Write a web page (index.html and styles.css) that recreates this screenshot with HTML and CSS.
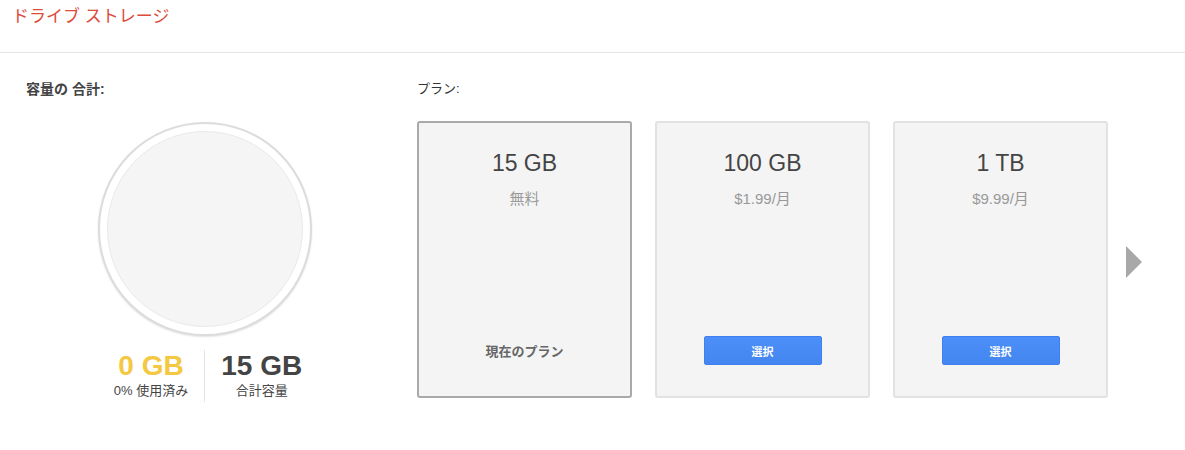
FILE: index.html
```html
<!DOCTYPE html>
<html lang="ja">
<head>
<meta charset="utf-8">
<title>ドライブ ストレージ</title>
<link rel="stylesheet" href="styles.css">
</head>
<body>
<header class="header">
  <h1 class="title">ドライブ ストレージ</h1>
</header>
<main class="main">
  <section class="total">
    <h2 class="label">容量の 合計:</h2>
    <div class="gauge">
      <div class="gauge-inner"></div>
    </div>
    <div class="stats">
      <div class="stat">
        <div class="stat-value used">0 GB</div>
        <div class="stat-caption">0% 使用済み</div>
      </div>
      <div class="stat-divider"></div>
      <div class="stat">
        <div class="stat-value">15 GB</div>
        <div class="stat-caption">合計容量</div>
      </div>
    </div>
  </section>
  <section class="plans">
    <h2 class="label plans-label">プラン:</h2>
    <div class="plan-row">
      <div class="card current">
        <div class="card-size">15 GB</div>
        <div class="card-price">無料</div>
        <div class="card-foot"><span class="current-text">現在のプラン</span></div>
      </div>
      <div class="card">
        <div class="card-size">100 GB</div>
        <div class="card-price">$1.99/月</div>
        <div class="card-foot"><button class="btn">選択</button></div>
      </div>
      <div class="card">
        <div class="card-size">1 TB</div>
        <div class="card-price">$9.99/月</div>
        <div class="card-foot"><button class="btn">選択</button></div>
      </div>
      <div class="next-arrow"></div>
    </div>
  </section>
</main>
</body>
</html>
```

FILE: styles.css
```css
* { box-sizing: border-box; }

body {
  margin: 0;
  background: #fff;
  font-family: "Liberation Sans", Arial, "Noto Sans CJK JP", sans-serif;
  color: #444;
}

.header {
  height: 53px;
  border-bottom: 1px solid #e5e5e5;
  padding-left: 12px;
}

.title {
  margin: 0;
  font-size: 17px;
  font-weight: normal;
  line-height: 34px;
  color: #dd4b39;
}

.main {
  display: flex;
  padding: 28px 0 0 26px;
}

.label {
  margin: 0;
  font-size: 14px;
  font-weight: bold;
  line-height: 16px;
  color: #444;
}

.plans-label {
  font-size: 13px;
  font-weight: normal;
  color: #333;
}

.total {
  width: 358px;
  margin-right: 33px;
  display: flex;
  flex-direction: column;
}

.gauge {
  align-self: center;
  margin-top: 25px;
  width: 214px;
  height: 214px;
  border-radius: 50%;
  border: 2px solid #dcdcdc;
  box-shadow: 0 1px 2px rgba(0, 0, 0, 0.12);
  background: #fff;
  display: flex;
  align-items: center;
  justify-content: center;
}

.gauge-inner {
  width: 196px;
  height: 196px;
  border-radius: 50%;
  border: 1px solid #e9e9e9;
  background: #f5f5f5;
}

.stats {
  margin-top: 14px;
  display: flex;
  justify-content: center;
  padding-left: 6px;
}

.stat {
  padding: 0 16px;
  text-align: center;
}

.stat-value {
  font-size: 28px;
  font-weight: bold;
  line-height: 32px;
  color: #444;
}

.stat-value.used {
  color: #f4c842;
}

.stat-caption {
  font-size: 13px;
  line-height: 18px;
  color: #444;
}

.stat-divider {
  width: 1px;
  height: 52px;
  background: #e5e5e5;
}

.plan-row {
  margin-top: 24px;
  display: flex;
  align-items: center;
  gap: 23px;
}

.card {
  width: 215px;
  height: 277px;
  border: 2px solid #e2e2e2;
  border-radius: 3px;
  background: #f4f4f4;
  padding-top: 26px;
  display: flex;
  flex-direction: column;
  align-items: center;
}

.card.current {
  border-color: #a9a9a9;
}

.card-size {
  font-size: 23px;
  line-height: 28px;
  color: #444;
}

.card-price {
  margin-top: 12px;
  font-size: 15px;
  line-height: 20px;
  color: #999;
}

.card-foot {
  margin-top: auto;
  margin-bottom: 31px;
  height: 29px;
  display: flex;
  align-items: center;
  justify-content: center;
}

.current-text {
  font-size: 13px;
  font-weight: bold;
  color: #666;
}

.btn {
  width: 118px;
  height: 29px;
  border: 1px solid #3f7ff0;
  border-radius: 2px;
  background: linear-gradient(#4d8ff9, #4486f0);
  color: #fff;
  font-family: inherit;
  font-size: 11px;
  font-weight: bold;
  padding: 0;
}

.next-arrow {
  margin-left: -5px;
  margin-top: 5px;
  width: 0;
  height: 0;
  border-top: 16px solid transparent;
  border-bottom: 16px solid transparent;
  border-left: 16px solid #a8a8a8;
}
```
